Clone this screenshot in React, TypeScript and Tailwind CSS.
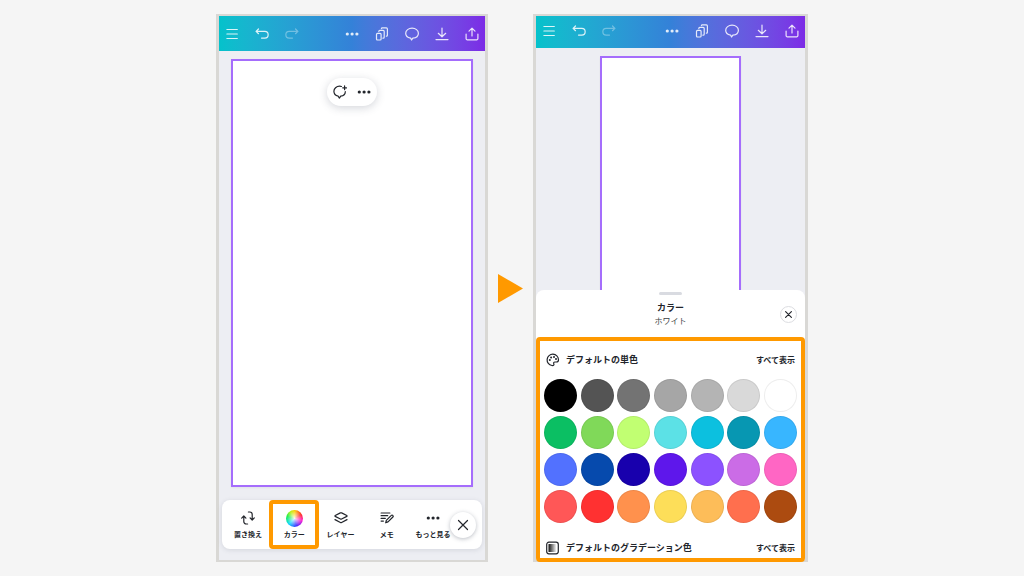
import type { ReactNode } from "react";

const swatches = [
  { name: "ブラック", fill: "bg-black" },
  { name: "ダークグレー", fill: "bg-[#545454]" },
  { name: "グレー", fill: "bg-[#737373]" },
  { name: "ミディアムグレー", fill: "bg-[#a6a6a6]" },
  { name: "シルバー", fill: "bg-[#b4b4b4]" },
  { name: "ライトグレー", fill: "bg-[#d9d9d9]" },
  { name: "ホワイト", fill: "bg-white" },
  { name: "グリーン", fill: "bg-[#0bbf63]" },
  { name: "ライトグリーン", fill: "bg-[#80d959]" },
  { name: "ライム", fill: "bg-[#c1ff72]" },
  { name: "アクア", fill: "bg-[#5ce1e6]" },
  { name: "ターコイズ", fill: "bg-[#0cc0df]" },
  { name: "ティール", fill: "bg-[#0797b2]" },
  { name: "スカイブルー", fill: "bg-[#38b6ff]" },
  { name: "コーンフラワー", fill: "bg-[#5271ff]" },
  { name: "コバルト", fill: "bg-[#064aad]" },
  { name: "ネイビー", fill: "bg-[#1800ad]" },
  { name: "バイオレット", fill: "bg-[#5e17eb]" },
  { name: "パープル", fill: "bg-[#8c52ff]" },
  { name: "オーキッド", fill: "bg-[#cb6ce6]" },
  { name: "ピンク", fill: "bg-[#ff66c4]" },
  { name: "コーラルレッド", fill: "bg-[#ff5757]" },
  { name: "レッド", fill: "bg-[#ff3131]" },
  { name: "オレンジ", fill: "bg-[#ff914d]" },
  { name: "イエロー", fill: "bg-[#fdde59]" },
  { name: "アプリコット", fill: "bg-[#fdbd59]" },
  { name: "コーラル", fill: "bg-[#ff6f4e]" },
  { name: "ブラウン", fill: "bg-[#ac4b10]" },
];

function Icon({ children, className = "size-3.5" }: { children: ReactNode; className?: string }) {
  return (
    <svg
      viewBox="0 0 14 14"
      fill="none"
      stroke="currentColor"
      strokeWidth="1.2"
      strokeLinecap="round"
      strokeLinejoin="round"
      aria-hidden="true"
      className={`block shrink-0 ${className}`}
    >
      {children}
    </svg>
  );
}

const MenuIcon = () => (
  <Icon>
    <path d="M1.900 2.500h10.400M1.900 7h10.400M1.900 11.500h10.400" />
  </Icon>
);

const UndoIcon = () => (
  <Icon>
    <path d="M3.500 2 1.100 4.400l2.400 2.300M1.100 4.400h8.700a3.200 3.200 0 0 1 0 6.700H6.500" />
  </Icon>
);

const RedoIcon = () => (
  <Icon>
    <path d="M10.500 2l2.400 2.400-2.400 2.300M12.900 4.400H4.200a3.200 3.200 0 0 0 0 6.700h3.300" />
  </Icon>
);

const DotsIcon = () => (
  <Icon>
    <g fill="currentColor" stroke="none">
      <circle cx="2.300" cy="7" r="1.600" />
      <circle cx="7.100" cy="7" r="1.600" />
      <circle cx="11.900" cy="7" r="1.600" />
    </g>
  </Icon>
);

const PagesIcon = () => (
  <Icon>
    <rect x="1.500" y="6.400" width="4.600" height="6.600" rx="1" />
    <path d="M3.800 4.600v-.2a1 1 0 0 1 1-1h3.400a1 1 0 0 1 1 1v5.800a1 1 0 0 1-1 1h-.3" />
    <path d="M6.400 1.700a1 1 0 0 1 .9-.8h4.100a1 1 0 0 1 1 1v6.300a1 1 0 0 1-1 1" />
  </Icon>
);

const CommentIcon = () => (
  <Icon>
    <path d="M5.600 11.100 6.600 13l1.200-1.800c3.200-.3 5.600-2.300 5.600-5C13.400 3.300 10.600 1.200 7.100 1.200S.7 3.300.7 6.200c0 2.400 2 4.400 4.900 4.900Z" />
  </Icon>
);

const DownloadIcon = () => (
  <Icon>
    <path d="M7 1v8.600M3.300 6.300 7 9.800l3.700-3.500M1 12.600h12" />
  </Icon>
);

const ShareIcon = () => (
  <Icon>
    <path d="M7 9V1.200M4 4.100l3-3 3 3M1.100 7v4.600a1.200 1.200 0 0 0 1.200 1.200h9.400a1.200 1.200 0 0 0 1.200-1.200V7" />
  </Icon>
);

const AddCommentIcon = () => (
  <Icon>
    <path d="M8.400 1.500C7.900 1.300 7.300 1.200 6.600 1.200 3.400 1.200.9 3.500.9 6.300c0 2.500 1.800 4.400 4.300 4.900l1.200 1.900 1.300-1.900c2.600-.4 4.600-2.200 4.600-4.500M11.600.9v3.800M9.700 2.800h3.800" />
  </Icon>
);

const ReplaceIcon = () => (
  <Icon>
    <path d="M.7 7.100l2.100-2.100 2.100 2.100M2.800 5.200v5.400a2.400 2.400 0 0 0 2.400 2.400h1.400M13.300 6.900l-2.100 2.100-2.100-2.100M11.200 8.800V3.400A2.400 2.400 0 0 0 8.800 1H7.400" />
  </Icon>
);

const LayersIcon = () => (
  <Icon>
    <path d="M6.400 1.900 1.200 4.500c-.4.200-.4.700 0 .9l5.200 2.600c.4.200.8.200 1.200 0l5.200-2.600c.4-.2.4-.7 0-.9L7.600 1.900c-.4-.2-.8-.2-1.200 0ZM1 8.600l5.400 2.900c.4.200.8.200 1.200 0L13 8.600" />
  </Icon>
);

const NotesIcon = () => (
  <Icon>
    <path d="M1.100 2h8.800M1.100 4.700h6.600M1.100 7.400h4.200M1.100 10.100h2.300M5.700 11.800l.6-2.400 5-5a1 1 0 0 1 1.500 0l.1.200a1 1 0 0 1 0 1.400l-4.900 4.900Z" />
  </Icon>
);

const CloseIcon = ({ className }: { className?: string }) => (
  <Icon className={className}>
    <path d="M2.500 2.500l9 9M11.500 2.500l-9 9" />
  </Icon>
);

const PaletteIcon = () => (
  <Icon>
    <path d="M5.900 12.500A5.700 5.700 0 1 1 12.500 6.700c0 1.600-.9 2.300-2.100 2.300H9c-1.300 0-1.600.8-1.200 1.700.5 1-.1 2.300-1.900 1.800Z" />
    <g fill="currentColor" stroke="none">
      <circle cx="3.800" cy="7.100" r="1" />
      <circle cx="5.100" cy="4.400" r="1" />
      <circle cx="8" cy="3.900" r="1" />
      <circle cx="10" cy="6" r="1" />
    </g>
  </Icon>
);

const GradientIcon = () => (
  <Icon>
    <defs>
      <linearGradient id="fade">
        <stop offset="0" stopColor="#111" />
        <stop offset="1" stopColor="#fff" />
      </linearGradient>
    </defs>
    <rect x="0.700" y="1.200" width="11.600" height="11.600" rx="2.200" />
    <rect x="2.500" y="3" width="8" height="8" rx="0.500" fill="url(#fade)" stroke="none" />
  </Icon>
);

function BarButton({ label, disabled, children }: { label: string; disabled?: boolean; children: ReactNode }) {
  return (
    <button type="button" aria-label={label} disabled={disabled} className="disabled:opacity-40">
      {children}
    </button>
  );
}

function TopBar({ className }: { className: string }) {
  return (
    <header
      className={`flex shrink-0 items-center justify-between bg-linear-to-r from-[#04c2cb] via-[#3481d8] to-[#7c2ae6] px-1.5 text-white/85 ${className}`}
    >
      <div className="flex gap-4">
        <BarButton label="メニュー"><MenuIcon /></BarButton>
        <BarButton label="元に戻す"><UndoIcon /></BarButton>
        <BarButton label="やり直す" disabled><RedoIcon /></BarButton>
      </div>
      <div className="flex gap-4">
        <BarButton label="その他"><DotsIcon /></BarButton>
        <BarButton label="ページ"><PagesIcon /></BarButton>
        <BarButton label="コメント"><CommentIcon /></BarButton>
        <BarButton label="ダウンロード"><DownloadIcon /></BarButton>
        <BarButton label="共有"><ShareIcon /></BarButton>
      </div>
    </header>
  );
}

function Tool({ label, highlighted, children }: { label: string; highlighted?: boolean; children: ReactNode }) {
  return (
    <button
      type="button"
      className="relative flex min-w-0 flex-1 flex-col items-center pt-[9px] whitespace-nowrap text-[7px] leading-2 font-bold"
    >
      <span className="mb-[3px] flex h-[18px] items-center">{children}</span>
      {label}
      {highlighted && <span className="absolute -inset-x-0.5 inset-y-0 rounded-sm border-4 border-[#ff9900]" />}
    </button>
  );
}

function SectionHeading({ title, icon, className }: { title: string; icon: ReactNode; className: string }) {
  return (
    <div className={`flex items-center justify-between px-0.5 ${className}`}>
      <h3 className="flex items-center gap-1.5 text-[9px] leading-3 font-bold">
        {icon}
        {title}
      </h3>
      <button type="button" className="text-[8px] leading-3 font-bold">
        すべて表示
      </button>
    </div>
  );
}

function EditorPhone() {
  return (
    <section className="flex flex-[272] flex-col border-x-[3px] border-y-2 border-[#d9d8d5] bg-[#edeef3]">
      <TopBar className="h-[35px]" />
      <div className="relative mx-3 mt-2 mb-[13px] flex-1 border-2 border-[#a56dfc] bg-white shadow-xs">
        <div className="absolute top-[17px] left-1/2 flex h-7 -translate-x-1/2 items-center gap-2.5 rounded-full bg-white px-[6px] shadow-[0_2px_8px_rgba(60,70,90,0.22)]">
          <button type="button" aria-label="コメントを追加"><AddCommentIcon /></button>
          <button type="button" aria-label="その他の操作"><DotsIcon /></button>
        </div>
      </div>
      <nav className="mx-[3px] mb-[11px] flex h-[49px] rounded-lg bg-white pr-1.5 pl-[3px] shadow-[0_1px_5px_rgba(60,70,90,0.14)]">
        <Tool label="置き換え"><ReplaceIcon /></Tool>
        <Tool label="カラー" highlighted>
          <span className="size-[17px] rounded-full bg-[radial-gradient(circle,rgba(255,255,255,0.9)_0%,rgba(255,255,255,0)_65%),conic-gradient(#fbd30a_0deg,#ff2a2a_60deg,#ff1fd0_105deg,#3a2cff_165deg,#10d8ff_225deg,#12ef4a_285deg,#b9f21a_330deg,#fbd30a_360deg)]" />
        </Tool>
        <Tool label="レイヤー"><LayersIcon /></Tool>
        <Tool label="メモ"><NotesIcon /></Tool>
        <Tool label="もっと見る"><DotsIcon /></Tool>
        <button
          type="button"
          aria-label="閉じる"
          className="relative -ml-1.5 flex size-[26px] shrink-0 items-center justify-center self-center rounded-full bg-white shadow-[0_1px_4px_rgba(60,70,90,0.35)]"
        >
          <CloseIcon className="size-3.5" />
        </button>
      </nav>
    </section>
  );
}

function ColorPhone() {
  return (
    <section className="flex flex-[275] flex-col border-x-[3px] border-y-2 border-[#d9d8d5] bg-[#edeef3]">
      <TopBar className="h-8 pb-[3px]" />
      <div className="mx-auto mt-2 w-[52.5%] flex-1 border-2 border-b-0 border-[#a56dfc] bg-white shadow-xs" />
      <div className="relative flex flex-col rounded-t-lg bg-white">
        <div className="relative flex h-[47px] flex-col items-center pt-0.5">
          <span className="h-[3px] w-[23px] rounded-full bg-[#d9dbe1]" />
          <h2 className="mt-[7px] text-[9px] leading-3 font-bold">カラー</h2>
          <p className="mt-px text-[8px] leading-3 text-[#3c3f45]">ホワイト</p>
          <button
            type="button"
            aria-label="カラーを閉じる"
            className="absolute top-4 right-2 flex size-[17px] items-center justify-center rounded-full border border-[#dcdde1] bg-white"
          >
            <CloseIcon className="size-[9px] stroke-[1.8]" />
          </button>
        </div>
        <div className="relative -mb-0.5 rounded-sm border-4 border-[#ff9900] bg-white px-1">
          <SectionHeading title="デフォルトの単色" icon={<PaletteIcon />} className="h-[38px]" />
          <div className="grid grid-cols-[repeat(7,33px)] justify-between gap-y-1">
            {swatches.map((swatch) => (
              <button
                key={swatch.name}
                type="button"
                aria-label={swatch.name}
                className={`size-[33px] rounded-full border border-black/7 ${swatch.fill}`}
              />
            ))}
          </div>
          <SectionHeading title="デフォルトのグラデーション色" icon={<GradientIcon />} className="mt-[15px] h-5" />
        </div>
      </div>
    </section>
  );
}

export default function App() {
  return (
    <main
      lang="ja"
      className="flex min-h-screen justify-center bg-[#f5f5f5] py-3.5 font-['Noto_Sans_CJK_JP',sans-serif] text-[#22252b]"
    >
      <div className="flex w-full max-w-[592px]">
        <EditorPhone />
        <div className="flex w-[45px] shrink-0 items-center justify-center">
          <svg viewBox="0 0 25 29" className="h-[29px] w-[25px]" aria-hidden="true">
            <path d="M0 0 25 14.500 0 29Z" fill="#ff9900" />
          </svg>
        </div>
        <ColorPhone />
      </div>
    </main>
  );
}
